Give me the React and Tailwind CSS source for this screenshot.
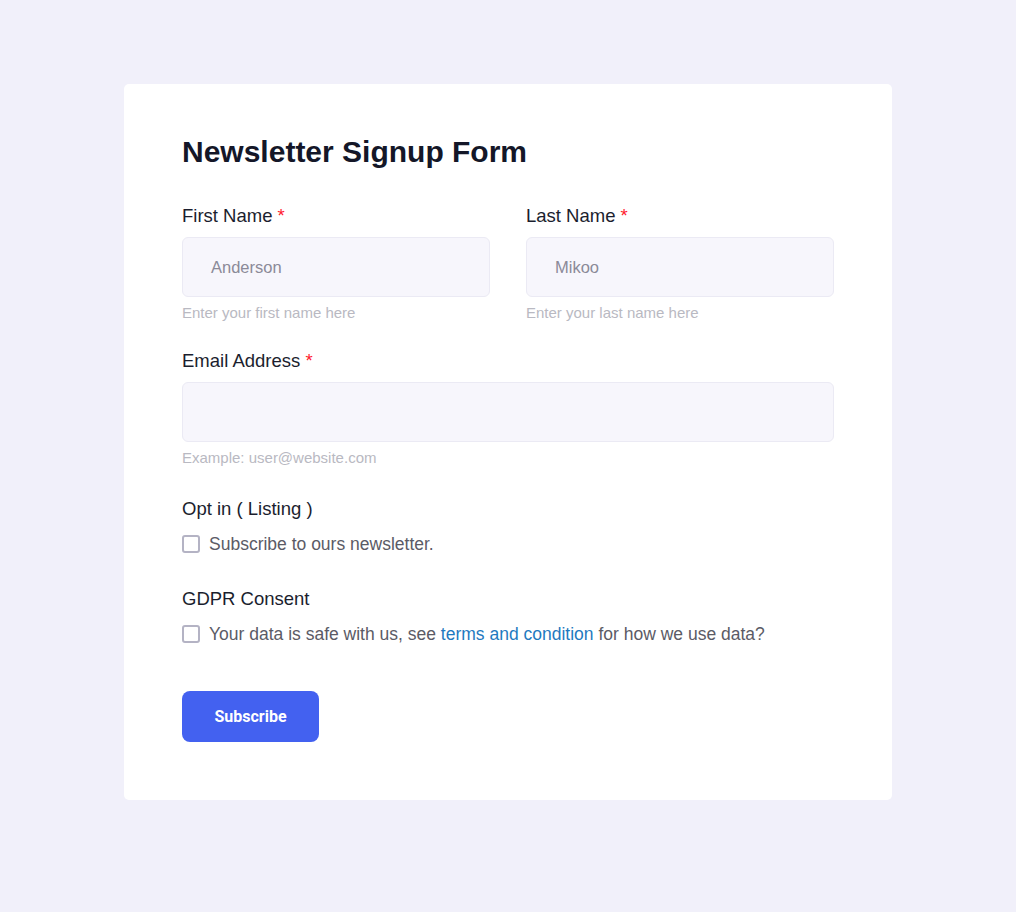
export default function App() {
  const font = { fontFamily: '"Liberation Sans", Arial, sans-serif' };
  return (
    <div className="min-h-[912px] w-full bg-[#f1f0fa] pt-[84px] pl-[124px]" style={font}>
      <div className="w-[768px] h-[716px] bg-white rounded-[5px] px-[58px]">
        <div className="pt-[48px]">
          <h1 className="text-[30px] leading-[40px] font-bold text-[#141728]">Newsletter Signup Form</h1>
          <div className="mt-[32px] grid grid-cols-2 gap-x-[36px]">
            <div>
              <label className="block text-[18.5px] leading-[24px] text-[#1b1e2e]">First Name <span className="text-[#ff1a2e]">*</span></label>
              <div className="mt-[9px] h-[60px] rounded-[6px] bg-[#f7f6fc] border border-[#ebeaf4] flex items-center pl-[28px] text-[16.5px] text-[#8b8a98]">Anderson</div>
              <div className="mt-[6px] text-[15px] leading-[20px] text-[#b9b9c2]">Enter your first name here</div>
            </div>
            <div>
              <label className="block text-[18.5px] leading-[24px] text-[#1b1e2e]">Last Name <span className="text-[#ff1a2e]">*</span></label>
              <div className="mt-[9px] h-[60px] rounded-[6px] bg-[#f7f6fc] border border-[#ebeaf4] flex items-center pl-[28px] text-[16.5px] text-[#8b8a98]">Mikoo</div>
              <div className="mt-[6px] text-[15px] leading-[20px] text-[#b9b9c2]">Enter your last name here</div>
            </div>
          </div>
          <div className="mt-[26px]">
            <label className="block text-[18.5px] leading-[24px] text-[#1b1e2e]">Email Address <span className="text-[#ff1a2e]">*</span></label>
            <div className="mt-[9px] h-[60px] rounded-[6px] bg-[#f7f6fc] border border-[#ebeaf4]"></div>
            <div className="mt-[6px] text-[15px] leading-[20px] text-[#b9b9c2]">Example: user@website.com</div>
          </div>
          <div className="mt-[29px]">
            <div className="text-[18.5px] leading-[24px] text-[#1b1e2e]">Opt in ( Listing )</div>
            <div className="mt-[13px] flex items-center h-[20px]">
              <span className="w-[18px] h-[18px] rounded-[3px] border-2 border-[#b4b3c4] bg-white"></span>
              <span className="ml-[9px] text-[17.5px] text-[#5b5b66]">Subscribe to ours newsletter.</span>
            </div>
          </div>
          <div className="mt-[33px]">
            <div className="text-[18.5px] leading-[24px] text-[#1b1e2e]">GDPR Consent</div>
            <div className="mt-[13px] flex items-center h-[20px]">
              <span className="w-[18px] h-[18px] rounded-[3px] border-2 border-[#b4b3c4] bg-white"></span>
              <span className="ml-[9px] text-[17.5px] text-[#5b5b66]">Your data is safe with us, see <span className="text-[#1f7ac0]">terms and condition</span> for how we use data?</span>
            </div>
          </div>
          <button className="mt-[47px] w-[137px] h-[51px] rounded-[8px] bg-[#4361f0] text-white text-[16px] font-bold" style={{ fontFamily: 'Roboto, "Liberation Sans", sans-serif' }}>Subscribe</button>
        </div>
      </div>
    </div>
  );
}
